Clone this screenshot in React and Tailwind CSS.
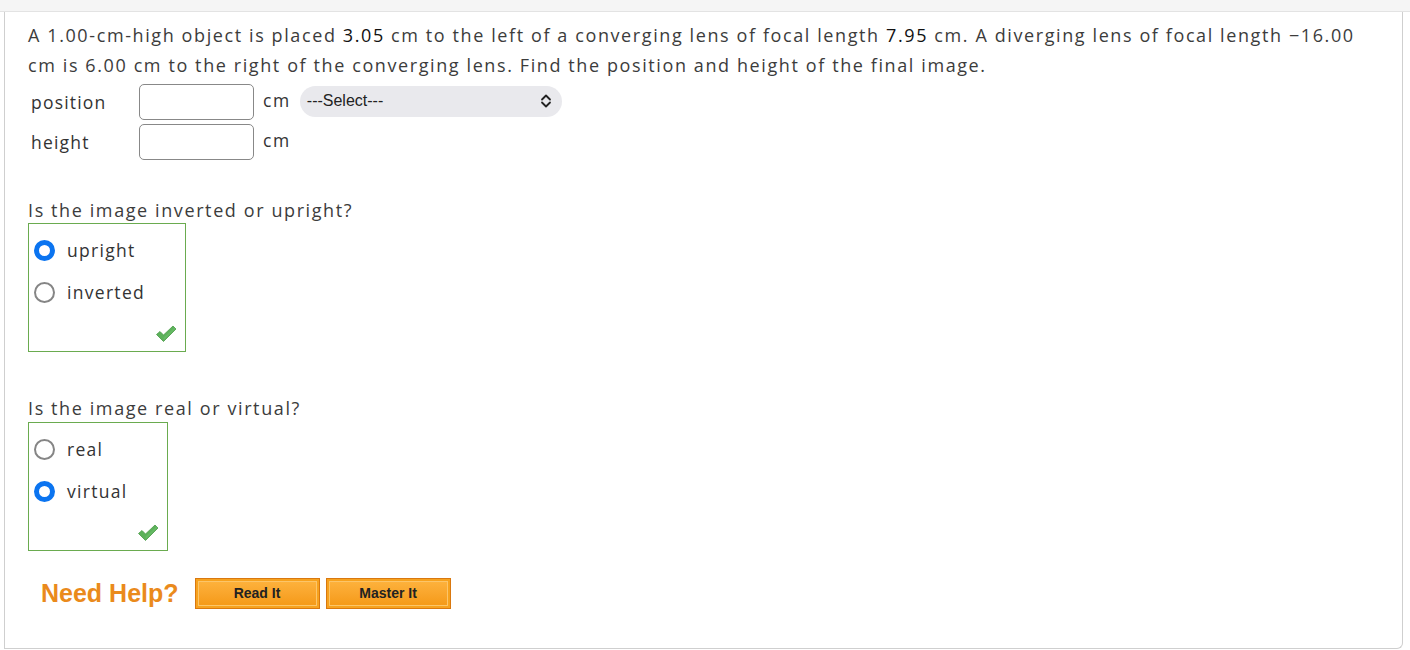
import React from 'react';

function Radio({ checked }) {
  return checked ? (
    <span className="inline-block w-[21px] h-[21px] rounded-full border-[5px] border-[#0b74f0] bg-white box-border" />
  ) : (
    <span className="inline-block w-[21px] h-[21px] rounded-full border-2 border-[#858585] bg-white box-border" />
  );
}

function Check() {
  return (
    <svg width="22" height="18" viewBox="0 0 22 18">
      <path d="M1.5 9.5 L5 6.5 L8.5 10 L18 1 L21 4 L8.5 16.5 Z" fill="#5cb15a" stroke="#4a9a48" strokeWidth="0.8" strokeLinejoin="round" />
      <path d="M8.5 12.5 L19.5 2.5 L20.5 3.8 L8.5 15.5 Z" fill="#6cc06a" opacity="0.6" />
    </svg>
  );
}

function ChoiceBox({ options, selected, width }) {
  return (
    <div className={`border border-[#6aab4f] ${width} h-[129px] relative`}>
      <div className="pt-[16px] flex flex-col gap-[21px]">
        {options.map((o) => (
          <label key={o} className="flex items-center gap-[12px] pl-[5px] text-[17.5px] leading-[21px] tracking-[1.3px] text-[#333]">
            <Radio checked={o === selected} />
            <span>{o}</span>
          </label>
        ))}
      </div>
      <div className="absolute right-[8px] bottom-[8px]">
        <Check />
      </div>
    </div>
  );
}

function OrangeButton({ children, width }) {
  return (
    <button className={`${width} h-[31px] border border-[#d9780f] bg-[#f7a21e] p-[2px]`}>
      <span className="flex items-center justify-center h-full border border-[#fcc569] bg-gradient-to-b from-[#fdb13b] to-[#f59a17] text-[14px] font-bold tracking-normal text-[#222] font-['Liberation_Sans',Arial,sans-serif]">
        {children}
      </span>
    </button>
  );
}

export default function App() {
  return (
    <div className="w-[1410px] h-[650px] bg-white font-['Open_Sans',sans-serif] tracking-[1.6px]">
      <div className="h-[12px] bg-[#f5f5f5] border-b border-[#e3e3e3]" />
      <div className="ml-[4px] w-[1399px] h-[637px] border-l border-r border-b border-[#cfcfcf] rounded-br-[6px] pl-[23px] pt-[8px]">
        <p className="w-[1345px] text-[18px] leading-[30px] text-[#3c3c3c]">
          A 1.00-cm-high object is placed <span className="text-[#111]">3.05</span> cm to the left of a converging lens of focal length{' '}
          <span className="text-[#111]">7.95</span> cm. A diverging lens of focal length −16.00 cm is 6.00 cm to the right of the converging lens.
          Find the position and height of the final image.
        </p>

        <div className="mt-[4px] flex flex-col gap-[4px]">
          <div className="flex items-center h-[36px]">
            <span className="w-[111px] pl-[3px] text-[17.5px] tracking-[1.2px] text-[#333]">position</span>
            <div className="w-[115px] h-[36px] border border-[#888] rounded-[5px] bg-white" />
            <span className="ml-[9px] text-[17.5px] text-[#333] -mt-[4px]">cm</span>
            <div className="ml-[9px] w-[262px] h-[31px] rounded-full bg-[#e9e9ed] flex items-center justify-between pl-[7px] pr-[10px] -mt-[2px] tracking-normal font-['Liberation_Sans',Arial,sans-serif]">
              <span className="text-[16px] text-[#222]">---Select---</span>
              <svg width="12" height="14" viewBox="0 0 12 14">
                <path d="M2 5.5 L6 1.5 L10 5.5 M2 8.5 L6 12.5 L10 8.5" fill="none" stroke="#222" strokeWidth="1.8" strokeLinecap="round" strokeLinejoin="round" />
              </svg>
            </div>
          </div>
          <div className="flex items-center h-[36px]">
            <span className="w-[111px] pl-[3px] text-[17.5px] tracking-[1.2px] text-[#333]">height</span>
            <div className="w-[115px] h-[36px] border border-[#888] rounded-[5px] bg-white" />
            <span className="ml-[9px] text-[17.5px] text-[#333] -mt-[4px]">cm</span>
          </div>
        </div>

        <p className="mt-[38px] text-[18px] leading-[24px] text-[#3c3c3c]">Is the image inverted or upright?</p>
        <div className="mt-[1px]">
          <ChoiceBox options={['upright', 'inverted']} selected="upright" width="w-[158px]" />
        </div>

        <p className="mt-[44px] text-[18px] leading-[24px] text-[#3c3c3c]">Is the image real or virtual?</p>
        <div className="mt-[2px]">
          <ChoiceBox options={['real', 'virtual']} selected="virtual" width="w-[140px]" />
        </div>

        <div className="mt-[24px] flex items-center pl-[13px] tracking-normal">
          <span className="text-[25px] font-bold text-[#ea8a1c] mr-[16px] font-['Liberation_Sans',Arial,sans-serif]">Need Help?</span>
          <OrangeButton width="w-[125px]">Read It</OrangeButton>
          <span className="w-[6px]" />
          <OrangeButton width="w-[125px]">Master It</OrangeButton>
        </div>
      </div>
    </div>
  );
}
